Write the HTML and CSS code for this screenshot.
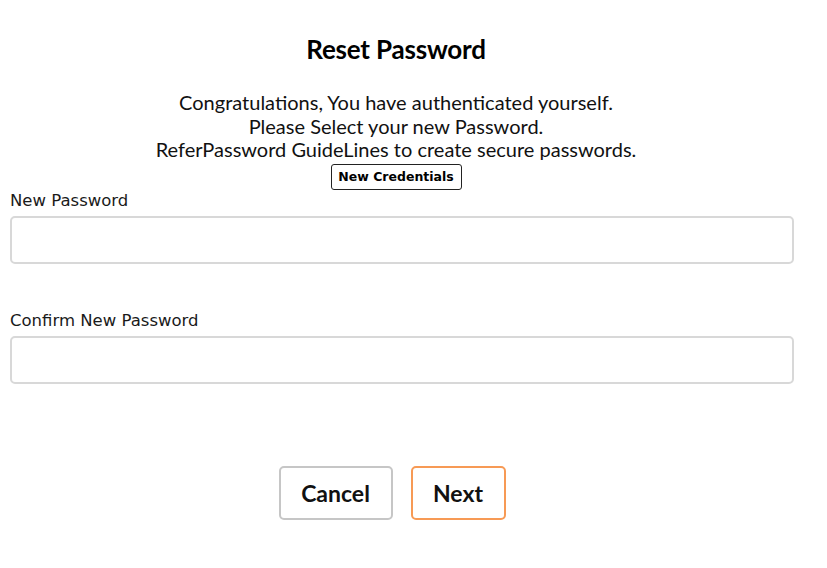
FILE: index.html
```html
<!DOCTYPE html>
<html>
<head>
<meta charset="utf-8">
<link rel="stylesheet" href="styles.css">
</head>
<body>
<div class="page">
  <h1 class="title">Reset Password</h1>
  <div class="intro">
    <p class="line">Congratulations, You have authenticated yourself.</p>
    <p class="line">Please Select your new Password.</p>
    <p class="line">ReferPassword GuideLines to create secure passwords.</p>
    <button class="cred">New Credentials</button>
  </div>
  <div class="field">
    <label class="label">New Password</label>
    <input class="input" type="password">
  </div>
  <div class="field second">
    <label class="label">Confirm New Password</label>
    <input class="input" type="password">
  </div>
  <div class="actions">
    <button class="btn cancel">Cancel</button>
    <button class="btn next">Next</button>
  </div>
</div>
</body>
</html>
```
FILE: styles.css
```css
* { box-sizing: border-box; }
html, body { margin: 0; padding: 0; background: #fff; }
body { font-family: Lato, "Liberation Sans", sans-serif; color: #000; }
.page { width: 792px; padding-top: 33px; }
.title {
  margin: 0;
  text-align: center;
  font-size: 26px;
  font-weight: 700;
  line-height: 32px;
  letter-spacing: -0.2px;
}
.intro {
  margin-top: 26px;
  display: flex;
  flex-direction: column;
  align-items: center;
}
.line {
  margin: 0;
  font-size: 20px;
  line-height: 23.5px;
  color: #111;
}
.cred {
  margin-top: 2px;
  height: 26px;
  width: 131px;
  padding: 0;
  border: 1.5px solid #222;
  border-radius: 3px;
  background: #fff;
  font-family: "DejaVu Sans", Verdana, sans-serif;
  font-weight: 700;
  font-size: 12.5px;
  color: #000;
}
.field {
  margin-left: 10px;
  width: 784px;
  display: flex;
  flex-direction: column;
}
.label {
  margin-top: 1px;
  font-family: "DejaVu Sans", Verdana, sans-serif;
  font-size: 16.5px;
  line-height: 20px;
  color: #1a1a1a;
}
.input {
  margin-top: 5px;
  height: 48px;
  border: 2px solid #d8d8d8;
  border-radius: 5px;
  background: #fff;
  outline: none;
}
.second { margin-top: 46px; }
.actions {
  margin-top: 82px;
  display: flex;
  justify-content: center;
  gap: 18px;
  padding-right: 8px;
}
.btn {
  height: 54px;
  border-radius: 5px;
  background: #fff;
  font-family: Lato, "Liberation Sans", sans-serif;
  font-weight: 700;
  font-size: 23px;
  color: #111;
  padding: 0;
}
.cancel { width: 114px; border: 2px solid #c6c6c6; }
.next { width: 95px; border: 2px solid #f79a55; }
```
